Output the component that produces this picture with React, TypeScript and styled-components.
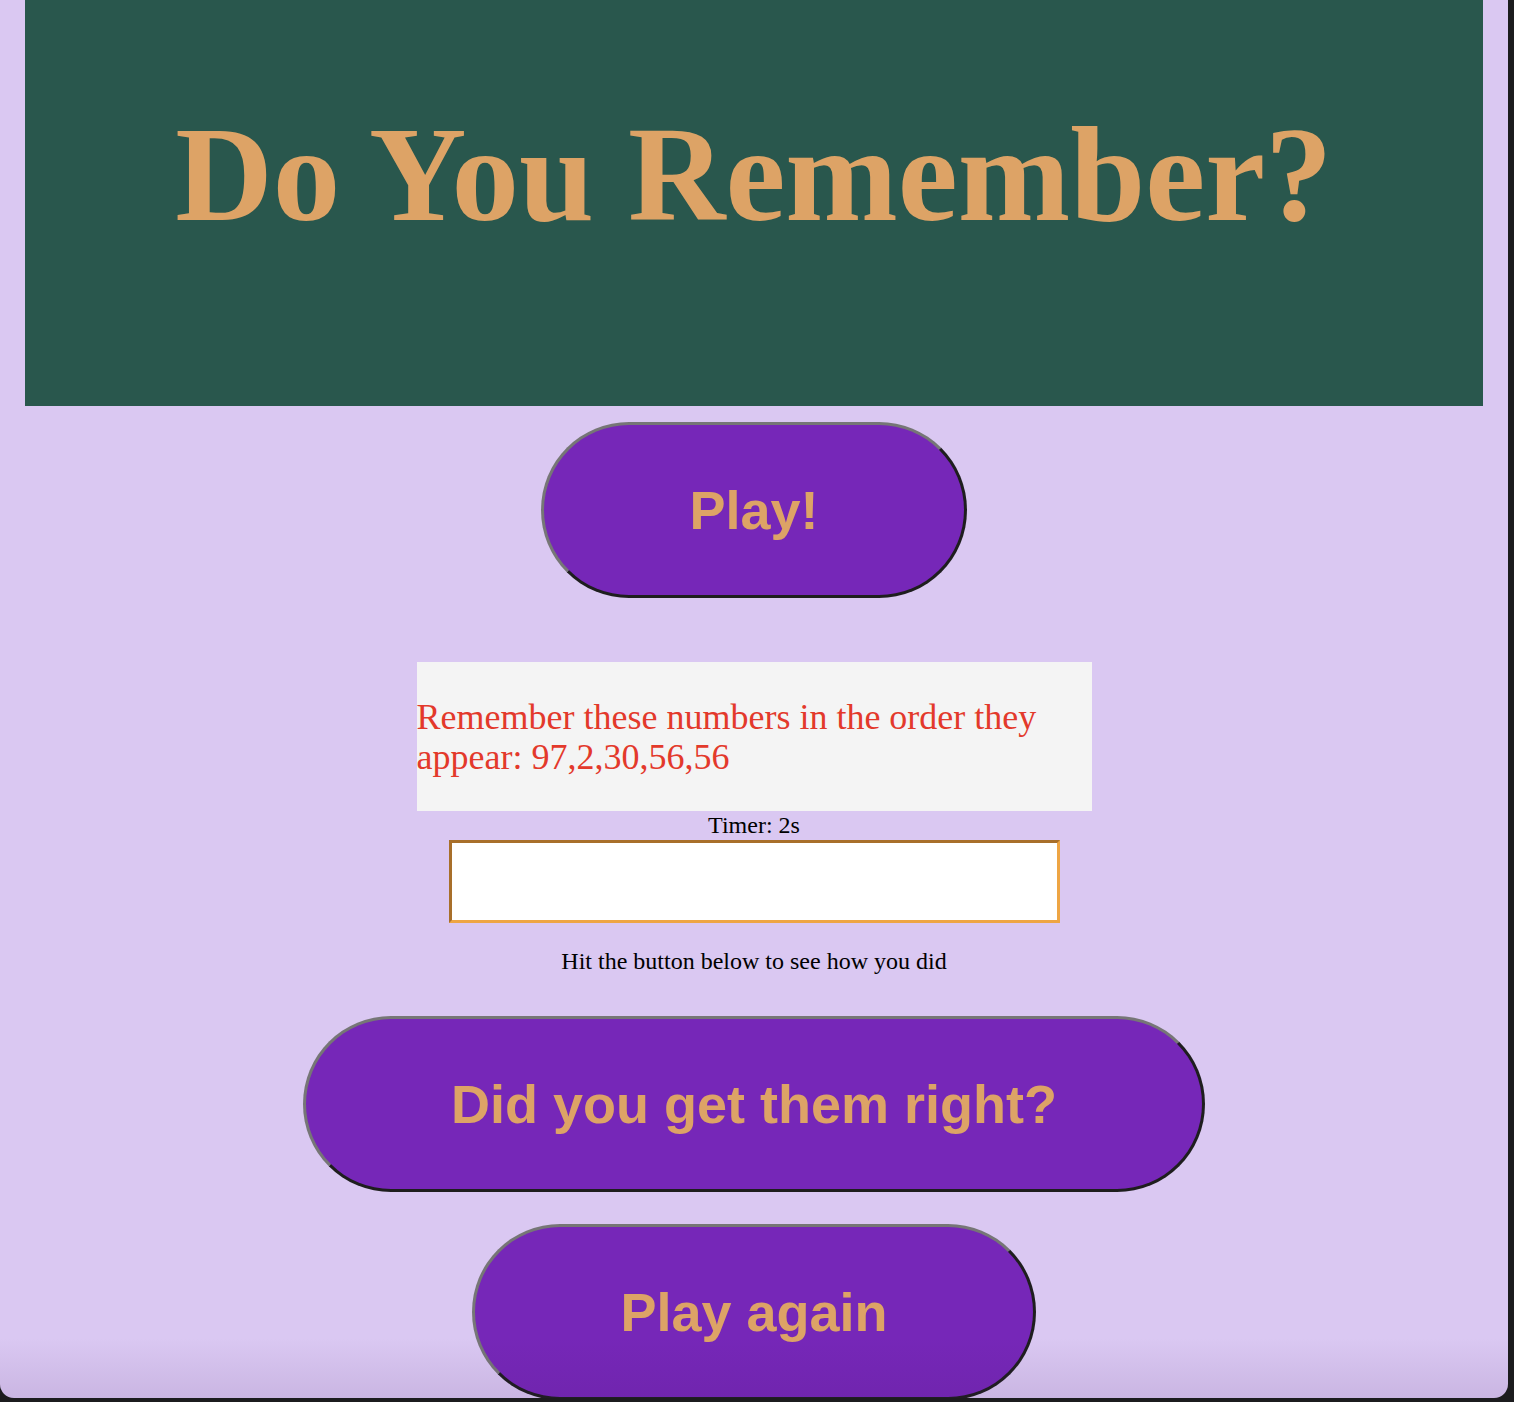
import React from "react";
import styled, { createGlobalStyle } from "styled-components";

const Global = createGlobalStyle`
  body {
    margin: 0;
    background: #1c1c1e;
  }
`;

const Window = styled.div`
  position: relative;
  width: 1508px;
  height: 1398px;
  background: #dac8f2;
  border-radius: 0 0 14px 14px;
  overflow: hidden;
  font-family: "Liberation Serif", "Times New Roman", serif;

  &::after {
    content: "";
    position: absolute;
    left: 0;
    right: 0;
    bottom: 0;
    height: 60px;
    background: linear-gradient(to bottom, rgba(60, 20, 90, 0), rgba(60, 20, 90, 0.1));
    pointer-events: none;
  }
`;

const Main = styled.main`
  display: flex;
  flex-direction: column;
  align-items: center;
  padding: 0 25px;
`;

const Header = styled.header`
  align-self: stretch;
  height: 406px;
  box-sizing: border-box;
  padding-bottom: 58px;
  background: #29574d;
  display: flex;
  align-items: center;
  justify-content: center;
`;

const Title = styled.h1`
  margin: 0;
  font-family: "Liberation Serif", "Times New Roman", serif;
  font-weight: bold;
  font-size: 135px;
  color: #dda366;
`;

const PillButton = styled.button<{ $gap: number }>`
  margin-top: ${({ $gap }) => $gap}px;
  height: 176px;
  padding: 0 145px;
  border-radius: 100px;
  border: 3px solid;
  border-color: #767676 #1e1e1e #1e1e1e #767676;
  background: #7627b8;
  color: #dda366;
  font-family: "Liberation Sans", Arial, sans-serif;
  font-weight: bold;
  font-size: 54px;
  line-height: 64px;
  cursor: pointer;
`;

const Prompt = styled.div`
  margin-top: 64px;
  width: 675px;
  box-sizing: border-box;
  padding: 35px 0 34px;
  background: #f4f4f4;
  color: #e3392b;
  font-size: 36px;
  line-height: 40px;
`;

const Note = styled.p<{ $gap?: number }>`
  margin: ${({ $gap }) => $gap ?? 0}px 0 0;
  font-size: 24px;
  line-height: 29px;
  color: #000;
  text-align: center;
`;

const Answer = styled.input`
  width: 611px;
  height: 83px;
  box-sizing: border-box;
  margin: 0;
  border: 3px solid;
  border-color: #a86f2a #eea544 #eea544 #a86f2a;
  background: #fff;
  font-size: 24px;
  outline: none;
`;

export default function App() {
  let numbers = [97, 2, 30, 56, 56];

  return (
    <Window>
      <Global />
      <Main>
        <Header>
          <Title>Do You Remember?</Title>
        </Header>

        <PillButton $gap={16}>Play!</PillButton>

        <Prompt>Remember these numbers in the order they appear: {numbers.join(",")}</Prompt>
        <Note>Timer: 2s</Note>
        <Answer type="text" />
        <Note $gap={24}>Hit the button below to see how you did</Note>

        <PillButton $gap={40}>Did you get them right?</PillButton>
        <PillButton $gap={32}>Play again</PillButton>
      </Main>
    </Window>
  );
}
